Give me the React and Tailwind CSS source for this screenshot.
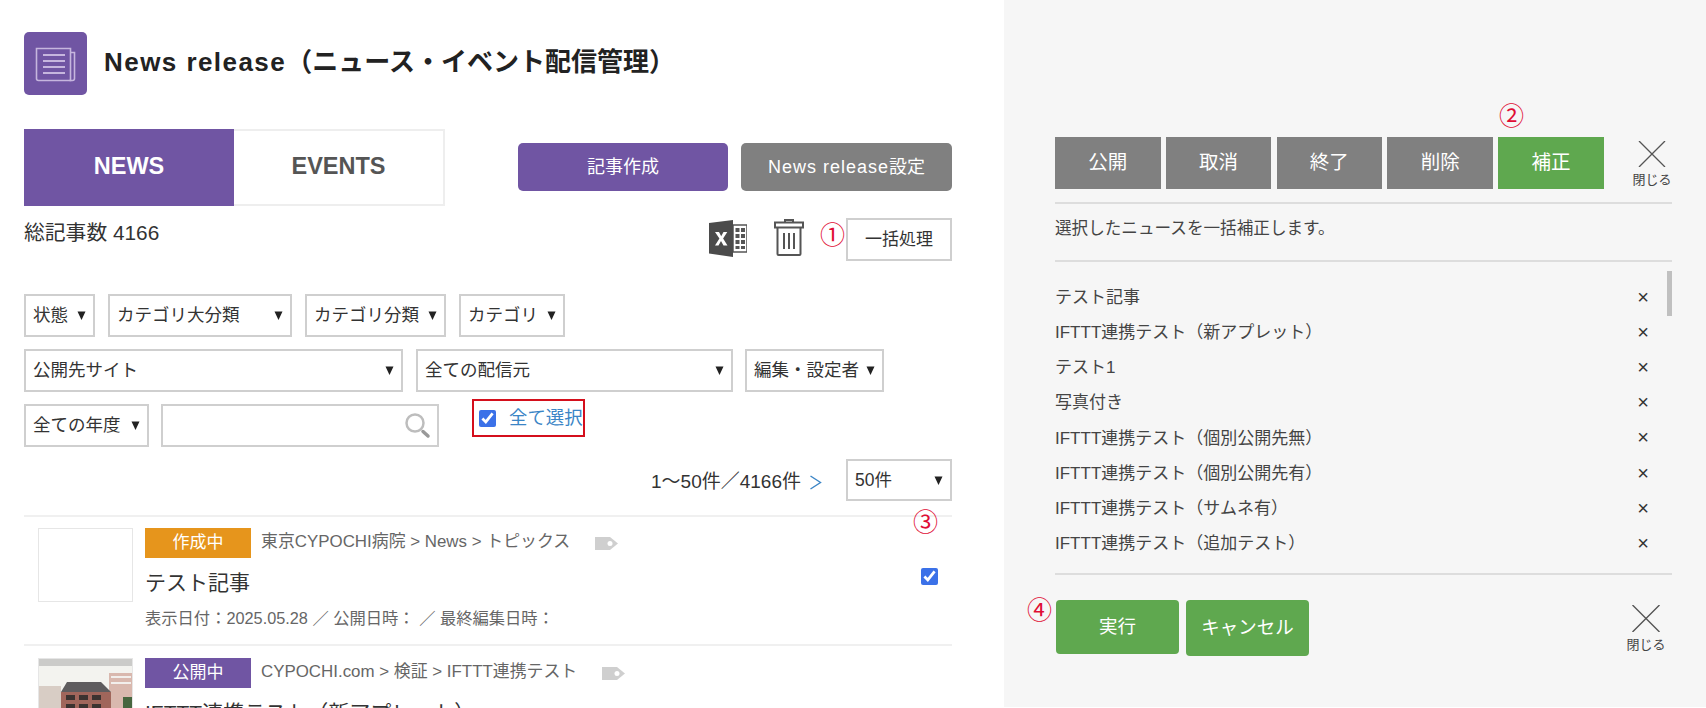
import React from 'react';

const font = 'font-["Liberation_Sans","Noto_Sans_CJK_JP",sans-serif]';

const Circled = ({ children, className }) => (
    <span className={`absolute text-[25px] leading-none text-[#e00d34] ${className}`}>{children}</span>
);

const SelectBox = ({ label, className }) => (
    <div className={`flex h-[43px] items-center justify-between border-2 border-[#cfcfcf] bg-white pl-[7px] pr-[7px] text-[17.5px] text-[#333] ${className}`}>
        <span className="whitespace-nowrap">{label}</span>
        <svg width="9" height="9" viewBox="0 0 9 9" className="shrink-0">
            <path d="M0.5 0.5h8L4.5 9z" fill="#222" />
        </svg>
    </div>
);

const CloseButton = ({ className }) => (
    <div className={`flex w-[40px] flex-col items-center ${className}`}>
        <svg width="28" height="27" viewBox="0 0 28 27">
            <path d="M0.5 0L27.5 27M27.5 0L0.5 27" stroke="#555" strokeWidth="1.4" fill="none" />
        </svg>
        <span className="mt-[4px] whitespace-nowrap text-[13px] leading-[18px] text-[#444]">閉じる</span>
    </div>
);

const NewsIcon = () => (
    <svg width="63" height="63" viewBox="0 0 63 63" className="shrink-0 rounded-[5px] bg-[#7055a3]">
        <path d="M12.5 16.5h34v32h-32a2 2 0 0 1-2-2z" stroke="#c6b6de" strokeWidth="1.6" fill="none" />
        <path d="M46.5 20.5h4v26a2 2 0 0 1-2 2h-3" stroke="#c6b6de" strokeWidth="1.6" fill="none" />
        <path d="M19 23h22M19 29h22M19 35h22M19 41h22" stroke="#c6b6de" strokeWidth="1.8" fill="none" />
    </svg>
);

const ExcelIcon = () => (
    <svg width="38" height="37" viewBox="0 0 38 37" className="shrink-0">
        <path d="M24 5h14v27H24z" fill="#fff" stroke="#555" strokeWidth="1.5" />
        <path d="M26.5 8h4v4h-4zM32 8h4v4h-4zM26.5 14h4v4h-4zM32 14h4v4h-4zM26.5 20h4v4h-4zM32 20h4v4h-4zM26.5 26h4v3h-4zM32 26h4v3h-4z" fill="#555" />
        <path d="M0 3L24 0v37L0 33.5z" fill="#4b4b4b" />
        <path d="M6 12h4l2.2 4.2L14.5 12h3.8l-4.2 6.6 4.4 7h-4l-2.5-4.5-2.5 4.5H6l4.4-7z" fill="#fff" />
    </svg>
);

const TrashIcon = () => (
    <svg width="30" height="37" viewBox="0 0 30 37" className="shrink-0">
        <path d="M11 3V1h8v2" stroke="#555" strokeWidth="2" fill="none" />
        <path d="M1 3.5h28v5H1z" fill="none" stroke="#555" strokeWidth="2" />
        <path d="M3.5 8.5V35a1 1 0 0 0 1 1h21a1 1 0 0 0 1-1V8.5" fill="none" stroke="#555" strokeWidth="2" />
        <path d="M10 14v16M15 14v16M20 14v16" stroke="#555" strokeWidth="2" fill="none" />
    </svg>
);

const SearchIcon = () => (
    <svg width="26" height="26" viewBox="0 0 26 26" className="shrink-0">
        <circle cx="10" cy="10" r="8.5" fill="#fff" stroke="#bdbdbd" strokeWidth="2.5" />
        <path d="M18 18.5L23 23" stroke="#999" strokeWidth="3.5" strokeLinecap="round" />
    </svg>
);

const TagIcon = () => (
    <svg width="23" height="13" viewBox="0 0 23 13" className="shrink-0">
        <path d="M0 0h15l8 6.5-8 6.5H0z" fill="#cfcfcf" />
        <circle cx="15" cy="6.5" r="2.5" fill="#fff" />
    </svg>
);

const BuildingThumb = () => (
    <svg width="95" height="74" viewBox="0 0 95 74" className="block">
        <rect width="95" height="74" fill="#f3f3ef" />
        <rect width="95" height="7" fill="#cbcbc9" />
        <rect x="70" y="14" width="25" height="40" fill="#d9b8ae" />
        <path d="M72 18h20M72 24h20" stroke="#f2efec" strokeWidth="2" />
        <rect x="0" y="27" width="22" height="34" fill="#d8cdc5" />
        <path d="M22 33l6-10h34l10 10z" fill="#5e5c5e" />
        <rect x="22" y="33" width="50" height="24" fill="#a0665b" />
        <path d="M27 36h9v5h-9zM40 36h9v5h-9zM53 36h9v5h-9zM27 45h9v6h-9zM40 45h9v6h-9zM53 45h9v6h-9z" fill="#3b3330" />
        <rect x="84" y="38" width="9" height="16" fill="#47663f" />
    </svg>
);

const NewsRow = ({ thumb, badge, badgeColor, crumbs, title, meta, checked, className }) => (
    <div className={`flex h-[129px] border-t-2 border-[#f0f0f0] pl-[14px] pr-[14px] ${className}`}>
        <div className="h-[74px] w-[95px] shrink-0 overflow-hidden border border-[#e6e6e6] bg-white">
            {thumb}
        </div>
        <div className="ml-[12px] flex-1">
            <div className="flex items-center">
                <span className={`flex h-[30px] w-[106px] items-center justify-center text-[17px] text-white ${badgeColor}`}>{badge}</span>
                <span className="ml-[10px] -mt-[2px] whitespace-nowrap text-[16.9px] text-[#666]">{crumbs}</span>
                <span className="ml-[25px]"><TagIcon /></span>
            </div>
            <p className="mt-[11px] text-[21px] leading-[28px] text-[#333]">{title}</p>
            <p className="mt-[9px] whitespace-nowrap text-[16.3px] leading-[24px] text-[#666]">{meta}</p>
        </div>
        {checked && (
            <input type="checkbox" defaultChecked className="mt-[40px] h-[17px] w-[17px] accent-[#3b71e8]" />
        )}
    </div>
);

const actions = [
    { label: '公開', color: 'bg-[#808080]' },
    { label: '取消', color: 'bg-[#808080]' },
    { label: '終了', color: 'bg-[#808080]' },
    { label: '削除', color: 'bg-[#808080]' },
    { label: '補正', color: 'bg-[#5fa84f]' },
];

const selected = [
    'テスト記事',
    'IFTTT連携テスト（新アプレット）',
    'テスト1',
    '写真付き',
    'IFTTT連携テスト（個別公開先無）',
    'IFTTT連携テスト（個別公開先有）',
    'IFTTT連携テスト（サムネ有）',
    'IFTTT連携テスト（追加テスト）',
];

const App = () => {
    return (
        <div className={`flex h-[708px] overflow-hidden bg-white ${font}`}>
            {/* Main column */}
            <div className="relative w-[1004px] shrink-0 pl-6 pr-[52px] pt-8">
                <div className="flex h-[63px] items-center">
                    <NewsIcon />
                    <h1 className="ml-[17px] -mt-[2px] whitespace-nowrap text-[26px] font-bold text-[#222]">
                        <span className="tracking-[1.45px]">News release</span>（ニュース・イベント配信管理）
                    </h1>
                </div>

                {/* Tabs and main buttons */}
                <div className="mt-[34px] flex justify-between">
                    <div className="flex h-[77px]">
                        <div className="flex w-[210px] items-center justify-center bg-[#7055a3] pb-[2px] text-[23.5px] font-bold text-white">NEWS</div>
                        <div className="flex w-[211px] items-center justify-center border-2 border-l-0 border-[#eeeeee] pb-[2px] text-[23.5px] font-bold text-[#555]">EVENTS</div>
                    </div>
                    <div className="mt-[14px] flex h-[48px] gap-[13px]">
                        <button className="w-[210px] rounded-[5px] bg-[#7055a3] text-[18px] text-white">記事作成</button>
                        <button className="w-[211px] rounded-[5px] bg-[#808080] text-[18px] text-white">
                            <span className="tracking-[1px]">News release</span>設定
                        </button>
                    </div>
                </div>

                {/* Count and bulk tools */}
                <div className="relative mt-[12px] flex h-[43px] items-start justify-between">
                    <span className="mt-[1px] text-[20.8px] leading-[28px] text-[#333]">総記事数 4166</span>
                    <div className="flex items-start">
                        <span className="mt-[2px]"><ExcelIcon /></span>
                        <span className="ml-[27px] mt-[1px]"><TrashIcon /></span>
                        <button className="ml-[42px] flex h-[43px] w-[106px] items-center justify-center border-2 border-[#cfcfcf] bg-white text-[17px] text-[#333]">一括処理</button>
                    </div>
                    <Circled className="left-[796px] top-[5px]">①</Circled>
                </div>

                {/* Filters */}
                <div className="mt-[33px] flex flex-col gap-3">
                    <div className="flex gap-[13px]">
                        <SelectBox label="状態" className="w-[71px]" />
                        <SelectBox label="カテゴリ大分類" className="w-[184px]" />
                        <SelectBox label="カテゴリ分類" className="w-[141px]" />
                        <SelectBox label="カテゴリ" className="w-[106px]" />
                    </div>
                    <div className="flex gap-[13px]">
                        <SelectBox label="公開先サイト" className="w-[379px]" />
                        <SelectBox label="全ての配信元" className="w-[317px]" />
                        <SelectBox label="編集・設定者" className="-ml-[1px] w-[139px]" />
                    </div>
                    <div className="flex gap-[12px]">
                        <SelectBox label="全ての年度" className="w-[125px]" />
                        <div className="flex h-[43px] w-[278px] items-center justify-end border-2 border-[#cfcfcf] pr-[6px]">
                            <SearchIcon />
                        </div>
                        <label className="ml-[21px] -mt-[5px] flex h-[38px] w-[113px] items-center border-2 border-[#d40f1c] pl-[5px]">
                            <input type="checkbox" defaultChecked className="h-[17px] w-[17px] accent-[#3b71e8]" />
                            <span className="ml-[13px] whitespace-nowrap text-[18.4px] text-[#3b85c6]">全て選択</span>
                        </label>
                    </div>
                </div>

                {/* Pagination */}
                <div className="mt-3 flex h-[42px] items-center justify-end">
                    <span className="mt-[4px] text-[19px] text-[#333]">1～50件／4166件</span>
                    <svg width="13" height="15" viewBox="0 0 13 15" className="ml-[8px] mt-[4px] shrink-0">
                        <path d="M1.5 1L11.5 7.5L1.5 14" stroke="#3b85c6" strokeWidth="1.4" fill="none" />
                    </svg>
                    <SelectBox label="50件" className="ml-[24px] !h-[42px] w-[106px]" />
                </div>

                {/* List */}
                <div className="relative mt-[14px]">
                    <Circled className="left-[889px] top-[-5px]">③</Circled>
                    <NewsRow
                        className="pt-[11px]"
                        badge="作成中"
                        badgeColor="bg-[#e6951c]"
                        crumbs="東京CYPOCHI病院 > News > トピックス"
                        title="テスト記事"
                        meta="表示日付：2025.05.28 ／ 公開日時： ／ 最終編集日時："
                        checked
                    />
                    <NewsRow
                        className="pt-[12px]"
                        thumb={<BuildingThumb />}
                        badge="公開中"
                        badgeColor="bg-[#7055a3]"
                        crumbs="CYPOCHI.com > 検証 > IFTTT連携テスト"
                        title="IFTTT連携テスト（新アプレット）"
                    />
                </div>
            </div>

            {/* Bulk panel */}
            <div className="relative h-[707px] flex-1 bg-[#f6f6f6] pl-[51px] pr-[34px] pt-[137px]">
                <Circled className="left-[495px] top-[104px]">②</Circled>
                <div className="flex h-[52px] justify-between">
                    <div className="flex gap-[5.3px]">
                        {actions.map((a) => (
                            <button key={a.label} className={`h-[52px] w-[105.5px] text-[19.5px] text-white ${a.color}`}>{a.label}</button>
                        ))}
                    </div>
                    <CloseButton className="pt-[4px]" />
                </div>

                <div className="mt-[13px] h-[58px] border-t-2 border-[#dddddd] pt-[12px]">
                    <p className="text-[16.6px] leading-[26px] text-[#444]">選択したニュースを一括補正します。</p>
                </div>

                <div className="relative h-[313px] border-t-2 border-[#dddddd] pt-[18px]">
                    <div className="absolute right-0 top-[9px] h-[45px] w-[5px] bg-[#c0c0c0]" />
                    {selected.map((s) => (
                        <div key={s} className="flex h-[35.2px] items-center justify-between pr-[23px] text-[17px] text-[#444]">
                            <span className="whitespace-nowrap">{s}</span>
                            <span className="-mt-[2px] text-[20px] leading-none text-[#333]">×</span>
                        </div>
                    ))}
                </div>

                <div className="relative flex justify-between border-t-2 border-[#dddddd] pt-[25px] pr-[6px]">
                    <Circled className="left-[-28px] top-[23px]">④</Circled>
                    <div className="ml-[1px] flex items-start gap-[7px]">
                        <button className="h-[54px] w-[123px] rounded-[4px] bg-[#5fa84f] text-[18.5px] text-white">実行</button>
                        <button className="h-[56px] w-[123px] rounded-[4px] bg-[#5fa84f] text-[18.5px] text-white">キャンセル</button>
                    </div>
                    <CloseButton className="pt-[5px]" />
                </div>
            </div>
        </div>
    );
};

export default App;
